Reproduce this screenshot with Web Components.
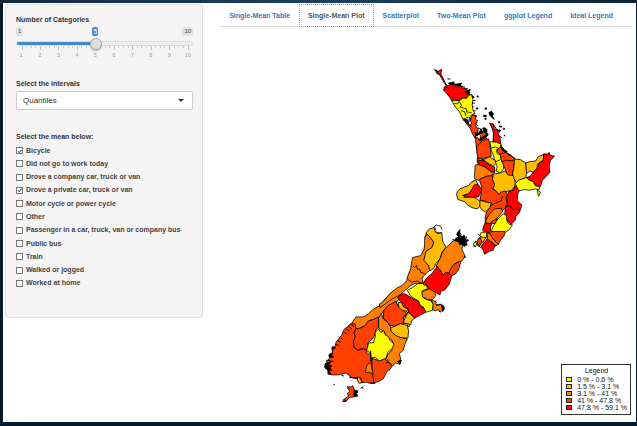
<!DOCTYPE html>
<html lang="en">
<head>
<meta charset="utf-8">
<title>Single-Mean Plot</title>
<style>
html{background:#071a2c linear-gradient(90deg,#102a42,#1c3f60 50%,#0c2236) top/100% 4px no-repeat}
body{margin:0;font-family:"Liberation Sans",Arial,sans-serif;font-size:7px;line-height:10px;color:#333}
</style>
</head>
<body>
<commute-app></commute-app>
<script>
const make=(name,html,setup)=>customElements.define(name,class extends HTMLElement{
  constructor(){super();this.attachShadow({mode:'open'}).innerHTML=html;}
  connectedCallback(){if(setup)setup(this,this.shadowRoot);}
});

make('category-slider',`<style>
:host{display:block}
label{display:block;font-weight:bold}
.bubbles{display:grid;grid-template-columns:1fr 1fr 1fr;margin-top:2px;font-size:6px;line-height:9px}
.bubbles span{justify-self:start;background:#e1e1e1;color:#444;border-radius:2px;padding:0 2px}
.track{position:relative;margin-top:2px}
output{position:absolute;top:-11px;left:calc(6px + (100% - 12px)*4/9);transform:translateX(-50%);background:#428bca;color:#fff;border-radius:2px;font-size:7px;line-height:9px;padding:0 1px}
.bubbles span:last-child{grid-column:3;justify-self:end}
input{appearance:none;display:block;width:100%;height:11px;margin:0;background:none;position:relative}
input::-webkit-slider-runnable-track{height:5px;border-radius:3px;border:1px solid #ddd;box-sizing:border-box;background:linear-gradient(90deg,#428bca 45%,#eee 45%) border-box}
input::-webkit-slider-thumb{appearance:none;width:12px;height:12px;margin-top:-4px;border-radius:50%;border:1px solid #aaa;box-sizing:border-box;background:#dedede;box-shadow:0 1px 2px #0004}
svg{display:block;width:100%;height:5px;margin-top:-3px}
.nums{display:grid;grid-template-columns:repeat(10,1fr);font-size:5px;line-height:8px;color:#999;text-align:center;margin:0 -4px}
</style>
<label for="n">Number of Categories</label>
<div class="bubbles"><span>1</span><span>10</span></div>
<div class="track"><input id="n" type="range" min="1" max="10" value="5"><output for="n">5</output></div>
<svg viewBox="0 0 177 5" preserveAspectRatio="none" shape-rendering="crispEdges"></svg>
<div class="nums"></div>`,(h,r)=>{
  let s='';for(let i=0;i<=36;i++){const x=Math.round(5.5+i*166/36)+.5;s+=`<path d="M${x} 0v${i%4?2:4}" stroke="${i%4?'#ccc':'#9cc4e4'}"/>`}
  r.querySelector('svg').innerHTML=s;
  r.querySelector('.nums').innerHTML=Array.from({length:10},(_,i)=>`<span>${i+1}</span>`).join('');
});

make('interval-select',`<style>
:host{display:block}
label{display:block;font-weight:bold}
div{display:grid;align-items:center;margin-top:2px}
select,svg{grid-area:1/1}
select{appearance:none;width:100%;height:19px;padding:0 6px;border:1px solid #ccc;border-radius:2px;background:#fff;color:#333;font:8px "Liberation Sans",Arial,sans-serif}
svg{width:6px;height:3px;justify-self:end;margin-right:9px;pointer-events:none}
</style>
<label for="s">Select the intervals</label>
<div><select id="s"><option>Quantiles</option></select><svg viewBox="0 0 6 3"><path d="M0 0h6L3 3z" fill="#333"/></svg></div>`);

make('mean-option',`<style>
:host{display:block}
label{display:flex;align-items:center;gap:3px;height:13px;font-weight:bold;color:#444;white-space:nowrap}
input{appearance:none;display:grid;place-items:center;width:7px;height:7px;margin:0;border:1px solid #777;box-sizing:border-box;background:#fff}
input:checked::after{content:"";width:3px;height:1px;border:solid #555;border-width:0 0 1px 1px;transform:rotate(-45deg)}
</style><label><input type="checkbox"><slot></slot></label>`,(h,r)=>{r.querySelector('input').checked=h.hasAttribute('checked')});

make('control-panel',`<style>
:host{display:block;align-self:start;box-sizing:border-box;background:#f4f4f4;border:1px solid #e3e3e3;border-radius:3px;padding:10px 9px 27px 10px}
interval-select{margin-top:20px}
fieldset{border:0;margin:22px 0 0;padding:0;min-width:0}
legend{padding:0;font-weight:bold}
.list{display:flex;flex-direction:column;justify-content:space-between;height:146px;margin-top:2px}
</style>
<category-slider></category-slider>
<interval-select></interval-select>
<fieldset><legend>Select the mean below:</legend><div class="list">
<mean-option checked>Bicycle</mean-option>
<mean-option>Did not go to work today</mean-option>
<mean-option>Drove a company car, truck or van</mean-option>
<mean-option checked>Drove a private car, truck or van</mean-option>
<mean-option>Motor cycle or power cycle</mean-option>
<mean-option>Other</mean-option>
<mean-option>Passenger in a car, truck, van or company bus</mean-option>
<mean-option>Public bus</mean-option>
<mean-option>Train</mean-option>
<mean-option>Walked or jogged</mean-option>
<mean-option>Worked at home</mean-option>
</div></fieldset>`);

make('plot-tabs',`<style>
:host{display:block;border-bottom:1px solid #ddd}
nav{display:flex;padding:0 1px}
a{box-sizing:border-box;height:22px;padding:6px 8px;border:1px solid transparent;color:#337ab7;font-weight:bold;text-decoration:none;white-space:nowrap}
a[aria-current]{color:#555;border:1px dotted #999;margin-bottom:-1px;height:23px;background:#fff}
</style><nav>
<a href="#table">Single-Mean Table</a><a href="#plot" aria-current="page">Single-Mean Plot</a><a href="#scatter">Scatterplot</a><a href="#two">Two-Mean Plot</a><a href="#ggplot">ggplot Legend</a><a href="#ideal">Ideal Legend</a></nav>`);

make('map-legend',`<style>
:host{display:block;box-sizing:border-box;border:1px solid #333;background:#fff;color:#111;padding:1px 3px 3px 4px}
h2{font:inherit;text-align:center;margin:0;line-height:10px}
ul{list-style:none;margin:0;padding:0;line-height:7px}
li{display:flex;align-items:center;gap:5px;white-space:nowrap}
i{width:6px;height:5px;box-sizing:border-box;border:1px solid #222}
</style><h2>Legend</h2><ul>
<li><i style="background:#ff0"></i>0 % - 0.6 %</li>
<li><i style="background:#ffbf00"></i>1.5 % - 3.1 %</li>
<li><i style="background:#ff8000"></i>3.1 % - 41 %</li>
<li><i style="background:#ff4000"></i>41 % - 47.8 %</li>
<li><i style="background:#f00"></i>47.8 % - 59.1 %</li></ul>`);

make('nz-map',`<style>
:host{display:block}
svg{display:block;width:100%}
path{stroke:#000;stroke-width:2.4;stroke-linejoin:round}
.y{fill:#ff0}.a{fill:#ffbf00}.o{fill:#ff8000}.t{fill:#ff4000}.r{fill:#f00}.n{fill:none}.k{fill:#000;stroke-width:3}
</style>
<svg viewBox="219 27 413 395" shape-rendering="crispEdges" role="img" aria-label="Map of New Zealand districts">
<g transform="translate(310 295) scale(.33333)">
<path class="o" d="M240 0L284 0 258 22 222 46 214 60 206 68 190 74 176 78 166 92 150 100 138 102 134 90 126 84 138 66 160 66 174 58 188 44 214 30 222 16Z"/>
<path class="t" d="M124 86L136 88 138 102 132 112 136 124 130 142 134 160 144 166 160 162 168 166 172 176 182 178 186 190 184 204 190 216 192 264 182 266 170 262 150 264 144 252 128 250 120 244 108 234 86 240 62 240 54 228 60 224 46 218 56 206 48 200 60 190 56 182 68 172 66 160 76 152 78 142 96 120 102 104Z"/>
<path class="k" d="M46 206L62 202 56 210 66 214 58 218 66 226 56 224 62 238 54 238 54 226 44 218ZM58 178L68 176 64 182 72 186 60 188ZM66 156L78 158 68 164ZM84 138L92 142M92 128L98 134M104 112L110 118M116 94L126 102M122 86L132 96M110 102L118 110M76 148L86 152M50 196L70 200"/>
<path class="t" d="M138 102L150 100 166 92 176 78 190 74 206 66 206 98 198 104 194 122 188 132 174 144 172 166 160 160 144 166 134 158 130 142 136 124 132 114Z"/>
<path class="t" d="M186 190L208 198 224 192 232 198 246 214 240 224 232 228 220 252 206 260 192 264 188 240 186 210Z"/>
<path class="o" d="M214 56L220 72 236 84 242 96 244 110 258 120 272 128 292 132 284 150 280 166 268 176 272 190 270 208 256 204 248 214 238 202 228 190 236 176 246 166 244 154 252 148 244 134 230 128 222 110 206 100 206 70Z"/>
<path class="y" d="M206 102L212 112 222 108 226 120 236 126 240 136 252 148 246 162 234 172 228 190 208 198 196 188 184 188 182 174 170 168 176 144 190 144 196 126 196 112Z"/>
<path class="o" d="M178 204L184 208 186 222 190 238 178 232 166 234 170 214Z"/>
<path class="k" d="M182 168L182 200M228 204L238 202M262 200L274 196 270 208ZM94 240L102 244M118 248L144 248M180 264L196 266"/>
<path class="a" d="M144 246L154 250 156 262 148 266 142 256Z"/>
<path class="t" d="M222 46L236 32 258 20 266 38 280 44 290 56 280 68 284 84 270 86 254 94 238 90 232 80 220 70Z"/>
<path class="a" d="M294 50L314 66 302 76 300 92 294 96 292 88 280 84 284 72Z"/>
<path class="a" d="M242 98L256 94 270 86 292 92 296 108 294 130 272 128 258 122 244 110Z"/>
<path class="t" d="M112 278L120 280 128 272 134 286 144 288 138 296 142 304 130 306 118 308 108 320 98 320 106 310 116 304 112 296 120 290Z"/>
<path class="k" d="M132 284L144 292 136 296 144 302 132 304ZM100 314L110 318M112 276L122 276M152 280L160 276M156 282L158 280M70 268L74 269M122 256L123 257M150 250L156 260"/>
</g>
<g transform="translate(380 215) scale(.33333)">
<path class="o" d="M134 70L140 52 150 66 162 82 156 98 140 108 132 134 146 152 150 166 136 178 126 190 130 204 104 206 90 214 60 240 34 254 12 270 0 278 -2 268 12 258 30 236 50 220 66 212 80 198 84 182 92 162 94 148 98 128 122 122 132 104 134 90Z"/>
<path class="n" d="M98 152L104 158 110 152 112 162 120 164 122 172 134 176M82 192L96 202 112 198 126 206"/>
<path class="a" d="M138 54L148 42 162 38 166 50 176 54 186 54 188 78 198 98 186 112 180 132 168 146 160 162 150 168 146 152 132 136 138 110 156 98 162 82 150 66Z"/>
<path class="n" d="M162 38L168 30 182 34 186 44M166 50L172 56 186 52M164 34L168 46M134 68L142 58"/>
<path class="o" d="M198 98L210 88 216 80 232 72 240 84 248 88 246 104 256 124 246 138 228 144 216 158 210 172 206 178 198 172 190 180 180 164 168 154 180 132 188 112Z"/>
<path class="k" d="M228 70L236 66 230 58 240 44 238 60 250 66 252 60 258 74 266 76 258 82 262 90 252 92 246 86 240 90 236 80 226 78ZM248 90L256 96M252 124L258 128M218 74L228 76M240 52L244 60M258 64L260 70"/>
<path class="t" d="M210 166L222 148 244 138 240 150 236 164 226 178 214 182 206 178Z"/>
<path class="r" d="M172 154L180 166 190 180 198 172 206 174 216 182 208 208 194 226 184 228 180 240 160 230 146 222 140 210 130 206 138 192 148 182 158 174 166 162Z"/>
<path class="t" d="M12 286L24 272 48 260 56 276 70 284 80 296 70 308 74 324 60 326 44 334 28 330 22 320 10 310Z"/>
<path class="y" d="M82 226L98 218 114 206 128 206 134 212 140 210 142 222 126 228 128 246 138 254 154 258 160 268 158 286 138 292 130 276 120 270 116 258 92 244Z"/>
<path class="o" d="M126 232L136 226 150 222 164 232 168 242 158 254 144 254 128 246Z"/>
<path class="o" d="M154 256L168 260 168 270 184 268 192 274 192 284 182 290 176 284 166 288 158 284 160 270Z"/>
<path class="k" d="M184 270L192 276 192 284 188 290 186 278ZM168 271L180 270M176 288L182 292"/>
<path class="r" d="M54 246L68 236 78 238 96 250 116 260 120 274 130 278 138 292 122 300 104 310 96 300 86 292 84 282 70 278 72 268 58 256Z"/>
<path class="a" d="M56 262L66 264 70 276 84 282 80 290 64 284 56 276Z"/>
<path class="a" d="M84 292L94 300 104 310 96 316 92 330 82 326 70 324 76 308Z"/>
</g>
<g transform="translate(425 60) scale(.33333)">
<path class="r" d="M30 30L40 34 50 28 48 42 62 70 68 78 78 72 92 72 94 80 108 76 112 84 128 86 122 96 134 100 126 110 128 118 112 114 104 122 88 118 80 122 76 114 68 104 56 90 58 82 64 78 50 56 44 44 36 40Z"/>
<path class="k" d="M28 28L38 34M34 38L44 44M68 56L76 58M70 70L88 66 84 74ZM86 74L110 70 104 78ZM106 78L120 82M124 94L136 88 130 100ZM122 100L136 98M116 116L130 118M132 104L142 106 148 112 140 114ZM140 120L152 122M138 128L150 130M136 140L146 140M140 154L152 152M60 80L70 84M56 92L62 88M157 108h3v3h-3zM154 144h5v3h-5zM181 144h4v4h-4zM176 166h8v4h-8zM180 175h4v3h-4zM192 158L200 154 206 162 202 168 208 178 196 168ZM221 185h3v4h-3zM224 198h6v3h-6zM236 205h3v3h-3zM222 210h5v3h-5zM238 226h2v2h-2zM174 204h8v4h-8z"/>
<path class="y" d="M80 122L104 122 114 114 124 116 132 106 140 104 144 118 142 134 144 150 150 160 138 166 138 176 126 172 116 182 104 156 92 142Z"/>
<path class="n" d="M88 130L98 132 102 124 110 136 106 142 124 146 126 156 140 158M108 152L120 156 122 168"/>
<path class="t" d="M118 180L128 190 134 196 140 190 136 180 142 166 154 166 152 178 158 182 152 196 160 210 158 220 182 212 188 222 180 230 190 242 196 290 176 292 160 300 154 260 152 238 144 224 136 206 128 196Z"/>
<path class="k" d="M116 176L128 180 132 190 122 188ZM130 170L138 178M130 192L140 200M146 164L156 170M150 190L160 198M158 204L166 206M168 206L174 218 162 222ZM176 210L186 208 186 216 178 218ZM150 216L162 224 154 232ZM148 230L156 236M160 238L178 228 190 222 186 230 166 242ZM182 218L188 226M134 178L132 186"/>
<path style="fill:#fff;stroke-width:1" d="M154 230L168 222 164 236ZM124 174L132 172 130 180Z"/>
<path class="r" d="M194 190L206 192 208 206 220 210 220 220 226 236 228 250 214 250 204 244 206 222 202 206Z"/>
<path class="k" d="M204 192L214 206M216 208L224 214M222 228L232 234M220 216L226 216"/>
</g>
<g transform="translate(450 145) scale(.33333)">
<path class="t" d="M80 6L98 -14 116 -18 122 12 124 34 104 40 84 40 82 26Z"/>
<path class="y" d="M120 -10L140 -8 154 -2 152 10 140 14 142 26 152 30 154 44 162 60 160 74 150 84 138 78 142 66 136 50 130 30 124 16Z"/>
<path class="n" d="M122 10L136 6 150 12M138 50L152 44"/>
<path class="t" d="M154 4L164 18 180 30 192 38 194 50 188 92 172 92 168 78 160 60 154 44 152 30 142 20 144 12Z"/>
<path class="n" d="M150 28L168 22 180 34M156 50L170 46 194 48"/>
<path class="k" d="M152 0L160 12 172 20 164 22 156 14ZM170 24L184 32M184 32L196 42"/>
<path class="o" d="M76 60L92 58 104 66 124 80 130 86 124 94 110 94 86 106 74 102 74 82Z"/>
<path class="t" d="M82 40L96 40 104 52 90 60 82 54Z"/>
<path class="r" d="M86 46L102 48 118 60 134 66 134 84 120 78 108 66 88 60Z"/>
<path class="a" d="M100 44L118 36 136 46 138 56 130 64 110 52Z"/>
<path class="a" d="M194 42L212 44 228 54 230 84 228 98 206 106 200 112 190 100 188 86 192 70Z"/>
<path class="a" d="M228 54L240 50 258 48 264 36 282 28 280 46 262 58 262 70 250 82 240 78 230 86Z"/>
<path class="r" d="M282 26L292 28 298 22 300 30 314 34 302 46 298 62 300 82 278 106 272 124 258 122 250 110 236 104 230 98 240 94 252 80 264 68 266 56 280 46Z"/>
<path class="y" d="M196 116L206 106 230 98 238 106 250 110 256 122 270 126 268 134 256 132 238 136 224 134 206 138Z"/>
<path class="y" d="M262 134L272 142 266 154 264 146Z"/>
<path class="r" d="M196 122L208 138 204 146 202 168 216 180 208 204 198 214 196 226 184 238 170 224 164 210 166 190 174 178 170 158 176 140 190 136Z"/>
<path class="n" d="M166 186L180 182 190 196 202 192 212 196"/>
<path class="a" d="M130 88L150 84 166 78 174 90 190 92 196 112 194 124 186 136 160 142 150 152 138 138 128 130 134 120 128 104Z"/>
<path class="a" d="M22 140L30 132 44 126 56 122 66 110 78 106 84 118 66 134 60 146 44 152 42 158 68 154 84 164 92 170 90 184 82 192 66 188 52 180 44 170 24 164 20 150Z"/>
<path class="r" d="M38 152L56 146 68 130 72 120 84 118 96 134 92 144 86 156 70 158 52 156Z"/>
<path class="t" d="M88 104L110 94 128 92 128 104 134 120 128 132 138 138 148 150 152 142 166 138 172 148 168 158 172 178 164 192 148 204 136 236 106 234 106 216 110 202 118 190 122 176 104 168 90 166 96 134 94 122Z"/>
<path class="n" d="M118 186L136 174 154 168 158 154"/>
<path class="a" d="M90 166L110 172 124 174 120 188 106 202 96 194 90 186Z"/>
<path class="o" d="M108 226L120 206 134 192 154 190 158 200 146 216 132 226 118 236 108 234Z"/>
<path class="r" d="M104 236L126 236 122 246 122 258 106 264 98 256Z"/>
<path class="y" d="M160 206L170 212 170 226 178 238 188 240 178 254 166 262 124 260 130 244 144 222Z"/>
<path class="t" d="M112 264L124 260 166 260 162 274 152 286 144 300 128 280Z"/>
<path class="o" d="M112 264L120 266 128 280 144 298 138 304 124 290 112 284Z"/>
<path class="y" d="M94 262L110 262 110 278 98 280 90 272Z"/>
<path class="a" d="M90 276L108 278 100 292 88 292Z"/>
<path class="t" d="M84 282L92 280 96 292 88 306 82 300Z"/>
<path class="r" d="M96 300L112 282 136 300 130 316 116 320 104 328 100 316 94 308Z"/>
<path class="y" d="M70 298L78 288 84 294 76 306Z"/>
<path class="k" d="M76 290L82 298M70 302L76 304M84 268L90 272M84 296L92 308"/>
</g>
</svg>`);

make('plot-view',`<style>
:host{display:block;position:relative}
map-legend{position:absolute;right:1px;bottom:7px}
</style><nz-map></nz-map><map-legend></map-legend>`);

make('commute-app',`<style>
:host{display:grid;box-sizing:border-box;min-height:calc(100vh - 7px);margin:3px 1px 4px 3px;padding:1px 4px 0 2px;background:#fff;grid-template-columns:minmax(0,12fr) minmax(0,25fr);gap:16px}
</style><control-panel></control-panel><main><plot-tabs></plot-tabs><plot-view></plot-view></main>`);
</script>
</body>
</html>
